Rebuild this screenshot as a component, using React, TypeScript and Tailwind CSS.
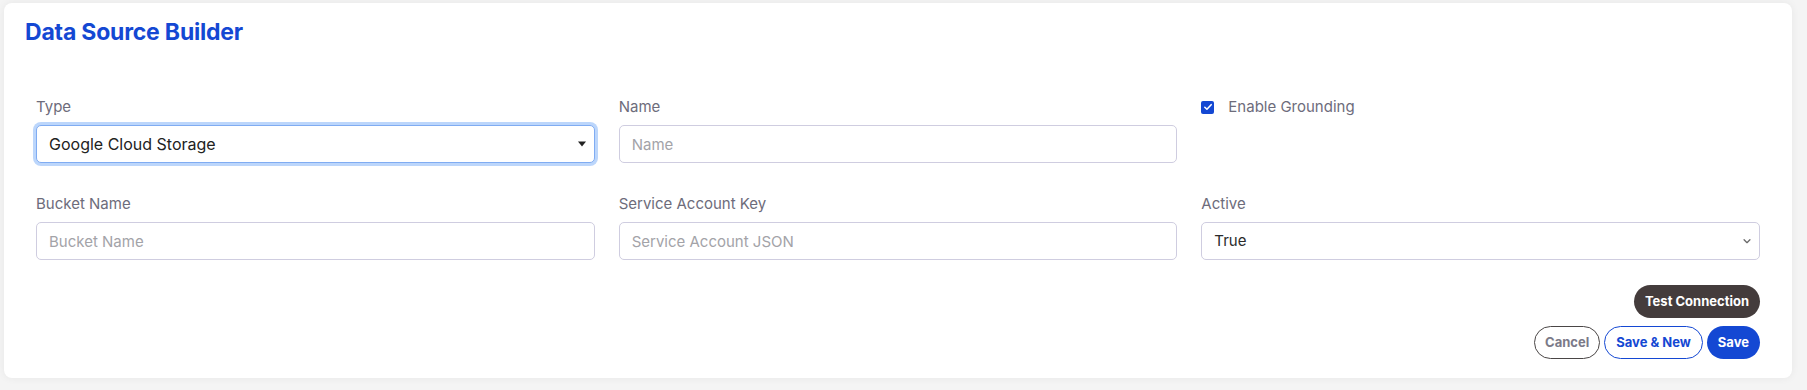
import React, { useState } from 'react';

const labelCls = "block text-[15px] leading-5 text-[#6d6c7b] mb-2 font-['Inter',sans-serif]";
const inputCls =
  "w-full h-[38px] rounded-[5px] border border-[#cfcde0] bg-white px-3 text-[15px] text-[#2b2b2b] placeholder:text-[#a3a3a8] outline-none font-['Inter',sans-serif]";

export default function App() {
  const [type, setType] = useState('gcs');
  const [grounding, setGrounding] = useState(true);
  const [active, setActive] = useState('true');

  return (
    <div className="w-full h-[390px] bg-[#f4f4f4] pl-1 pt-[3px] pr-[15px] pb-3 font-['Inter',sans-serif]">
      <div className="h-full bg-white rounded-lg shadow-[0_0_8px_rgba(0,0,0,0.06)] px-[21px] pt-[13px] pb-[19px] flex flex-col">
        {/* Header */}
        <h1 className="text-[23px] leading-8 font-bold text-[#1448d3] tracking-[-0.2px]">
          Data Source Builder
        </h1>

        {/* Form */}
        <div className="px-[11px] mt-[49px] grid grid-cols-3 gap-x-6 gap-y-[31px]">
          <div>
            <label className={labelCls}>Type</label>
            <div className="relative">
              <select
                value={type}
                onChange={(e) => setType(e.target.value)}
                className="appearance-none w-full h-[38px] rounded-[5px] border border-[#80acf2] ring-[3px] ring-[#bcd6fb] bg-white px-3 text-[16px] text-[#222] outline-none font-['Inter',sans-serif]"
              >
                <option value="gcs">Google Cloud Storage</option>
                <option value="s3">Amazon S3</option>
              </select>
              <span className="pointer-events-none absolute right-[9px] top-1/2 -translate-y-1/2 w-0 h-0 border-l-[4px] border-r-[4px] border-t-[5px] border-l-transparent border-r-transparent border-t-[#222]" />
            </div>
          </div>

          <div>
            <label className={labelCls}>Name</label>
            <input className={inputCls} placeholder="Name" />
          </div>

          <div>
            <label className="flex items-center gap-[14px] text-[15px] leading-5 text-[#6d6c7b] cursor-pointer">
              <span
                onClick={() => setGrounding(!grounding)}
                className={
                  grounding
                    ? 'w-[13px] h-[13px] rounded-[2px] bg-[#1448d3] flex items-center justify-center'
                    : 'w-[13px] h-[13px] rounded-[2px] border border-[#767676] bg-white'
                }
              >
                {grounding && (
                  <svg viewBox="0 0 12 12" className="w-[10px] h-[10px]">
                    <path d="M2.2 6.3 4.7 8.7 9.8 3.2" fill="none" stroke="#fff" strokeWidth="1.9" strokeLinecap="round" strokeLinejoin="round" />
                  </svg>
                )}
              </span>
              Enable Grounding
            </label>
          </div>

          <div>
            <label className={labelCls}>Bucket Name</label>
            <input className={inputCls} placeholder="Bucket Name" />
          </div>

          <div>
            <label className={labelCls}>Service Account Key</label>
            <input className={inputCls} placeholder="Service Account JSON" />
          </div>

          <div>
            <label className={labelCls}>Active</label>
            <div className="relative">
              <select
                value={active}
                onChange={(e) => setActive(e.target.value)}
                className={inputCls + ' appearance-none'}
              >
                <option value="true">True</option>
                <option value="false">False</option>
              </select>
              <svg viewBox="0 0 12 12" className="pointer-events-none absolute right-[8px] top-1/2 -translate-y-1/2 w-[10px] h-[10px]">
                <path d="M2.5 4.5 6 8l3.5-3.5" fill="none" stroke="#6b6b6b" strokeWidth="1.6" strokeLinecap="round" strokeLinejoin="round" />
              </svg>
            </div>
          </div>
        </div>

        {/* Actions */}
        <div className="px-[11px] mt-auto flex flex-col items-end gap-2">
          <button className="h-[33px] px-[11px] rounded-full bg-[#443c3c] text-white text-[13px] font-bold">
            Test Connection
          </button>
          <div className="flex gap-1">
            <button className="h-[33px] px-[10px] rounded-full border border-[#4a4646] bg-white text-[#7b7a88] text-[13px] font-bold">
              Cancel
            </button>
            <button className="h-[33px] px-[11px] rounded-full border border-[#1448d3] bg-white text-[#1448d3] text-[13px] font-bold">
              Save &amp; New
            </button>
            <button className="h-[33px] px-[11px] rounded-full bg-[#1448d3] text-white text-[13px] font-bold">
              Save
            </button>
          </div>
        </div>
      </div>
    </div>
  );
}
